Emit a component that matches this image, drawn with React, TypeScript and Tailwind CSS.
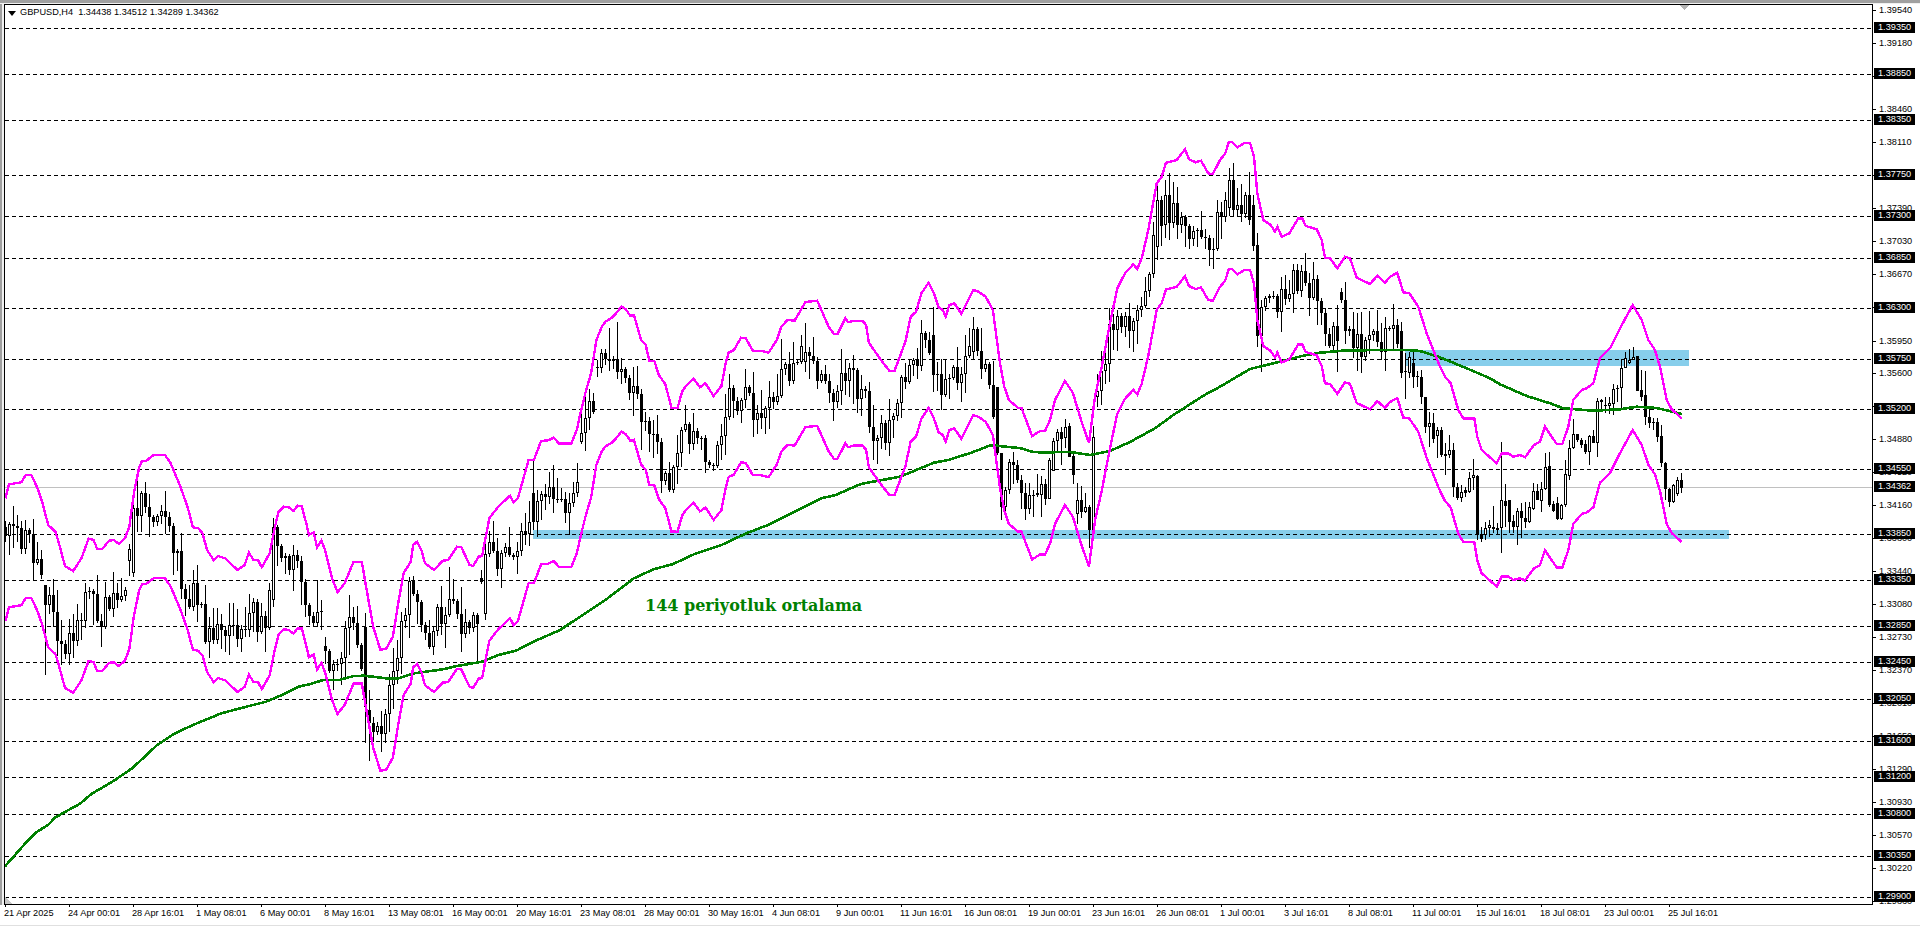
import React from "react";

type P = [number, number];
type C = { i: number; wt: number; bt: number; bb: number; wb: number; up: boolean };

const conv = (l: number[][], sx: number, ox: number, oy: number): P[] => l.map(([x, y]) => [ox + x / sx, oy + y / 3]);

const upper: P[] = [
  ...conv([[15,205],[25,163],[60,157],[72,135],[88,135],[105,175],[118,215],[135,285],[155,305],[165,340],[182,408],[205,423],[228,385],[248,326],[262,330],[272,356],[287,356],[305,332],[318,330],[333,342],[350,325],[362,290],[375,190],[390,110],[398,93],[410,92],[430,75],[462,75],[478,100],[505,170],[525,230],[540,292],[555,295],[567,310],[580,360],[598,390],[610,378],[630,385],[665,420],[685,405],[697,368],[710,390],[722,390],[733,412],[755,370],[770,290],[780,245],[795,230],[808,232],[822,243],[833,227],[845,228],[860,290],[865,315],[878,307],[888,352],[900,332],[910,360],[930,445],[945,487],[965,460],[990,395],[1013,395],[1025,470],[1045,590],[1065,660],[1082,655],[1100,620],[1115,520],[1130,430],[1150,395],[1157,345],[1168,335],[1180,360],[1190,400],[1215,420],[1240,392],[1255,390],[1280,350],[1292,352],[1315,405],[1325,408],[1340,380],[1350,378],[1370,265],[1395,230],[1428,197],[1438,217],[1450,205],[1480,90]], 2.8, 0, 430),
  ...conv([[95,540],[115,483],[135,481],[150,473],[165,490],[200,490],[215,450],[225,400],[240,335],[255,280],[270,180],[285,140],[295,125],[315,112],[325,100],[340,80],[352,87],[365,108],[375,105],[395,180],[408,195],[418,242],[432,243],[445,285],[463,313],[480,383],[497,384],[510,335],[520,318],[542,296],[560,322],[575,310],[598,348],[620,318],[632,250],[640,218],[655,210],[675,173],[688,175],[708,212],[730,212],[752,218],[775,180],[788,140],[805,120],[825,122],[855,66],[888,62],[900,90],[920,140],[935,162],[945,162],[967,115],[975,127],[990,122],[1015,122],[1025,135],[1033,188],[1065,238],[1090,272],[1105,272],[1135,185],[1150,110],[1165,95],[1180,40],[1200,8],[1215,40],[1228,82],[1240,90],[1248,110],[1258,75],[1272,70],[1292,102],[1325,30],[1340,35],[1360,50],[1380,90],[1390,170],[1400,250],[1412,320],[1425,360],[1450,383],[1460,383],[1490,468]], 2.8, 500, 280),
  [1040,431],[1045,431],[1050,420],[1055,400],[1065,381],[1073,393],[1075,400],[1082,423],[1089,443],
  ...conv([[165,800],[185,710],[210,580],[232,475],[255,430],[280,403],[292,417],[305,385],[325,300],[350,160],[365,140],[378,98],[410,90],[435,58],[447,88],[467,97],[483,92],[505,130],[518,133],[540,90],[555,72],[567,35],[575,35],[592,52],[615,38],[630,38],[642,80],[652,190],[670,270],[692,285],[705,305],[712,290],[725,320],[748,310],[775,265],[787,265],[797,288],[830,298],[845,330],[855,383],[870,385],[892,415],[915,380],[930,385],[950,443],[990,462],[1012,437],[1035,458],[1050,440],[1072,428],[1090,487],[1108,490],[1135,530],[1160,610],[1200,710]], 3, 1040, 130),
  ...conv([[615,410],[632,430],[655,510],[670,535],[695,535],[703,535],[712,590],[725,630],[770,670],[785,640],[805,640],[820,650],[840,645],[855,652]], 3, 1240, 240),
  ...conv([[402,435],[420,425],[435,380],[450,403],[470,432],[487,432],[505,380],[520,300],[545,270],[560,265],[580,250],[600,175],[630,145],[660,85],[698,15],[725,60],[745,120],[765,150],[780,200],[800,300],[815,328],[845,355]], 3, 1400, 300),
];

const lower: P[] = upper.map(([x, y]) => [x, y + 123 + (475 - y) * 0.012]);

const ma: P[] = [
  ...conv([[15,418],[75,350],[110,315],[145,293],[165,272],[200,252],[240,230],[275,200],[315,177],[348,157]], 3, 0, 727),
  ...conv([[370,1015],[400,985],[440,945],[490,910],[540,885],[620,850],[690,830],[745,815],[800,790],[835,770],[870,762],[905,750],[950,750],[990,738],[1020,737],[1090,746],[1115,745],[1160,730],[1240,718],[1280,708],[1350,695],[1395,675],[1445,662],[1500,632],[1568,600]], 2.8, 0, 430),
  ...conv([[295,960],[375,895],[430,868],[485,852],[545,822],[620,795],[690,760],[750,735],[900,655],[940,645],[1010,612],[1040,606],[1120,590],[1215,548],[1255,540],[1320,518],[1370,497],[1390,497],[1460,505],[1490,515],[1520,518]], 2.8, 500, 280),
  [1060,452],[1070,452],[1090,455],[1110,451],[1130,442],
  ...conv([[345,895],[400,855],[490,797],[540,770],[630,717],[700,700],[790,677],[840,668],[920,661],[1100,660]], 3, 1040, 130),
  ...conv([[60,153],[120,172],[200,205],[270,235],[300,253],[380,288],[450,310],[490,325],[580,332],[660,328],[710,320],[770,324],[845,342]], 3, 1400, 300),
];

const path: P[] = [
  ...conv([[15,290],[40,300],[60,340],[80,290],[100,370],[115,440],[130,510],[150,530],[172,620],[190,650],[215,600],[240,510],[260,490],[285,560],[320,510],[350,510],[375,330],[395,200],[420,240],[450,250],[485,320],[510,430],[530,490],[560,500],[580,600],[610,580],[640,590],[665,630],[700,530],[730,600],[750,550],[775,350],[800,390],[840,420],[855,500],[890,560],[905,580],[925,680],[950,700],[975,600],[1005,600],[1025,740],[1050,870],[1070,900],[1100,780],[1115,650],[1135,530],[1165,470],[1180,560],[1200,630],[1240,560],[1270,530],[1310,590],[1340,560],[1370,380],[1400,395],[1440,400],[1460,320],[1485,240],[1520,190],[1568,220]], 2.8, 0, 430),
  ...conv([[170,680],[195,680],[210,650],[228,530],[240,450],[270,340],[285,250],[305,280],[345,250],[365,310],[385,350],[405,420],[430,470],[450,540],[475,600],[500,530],[520,450],[550,500],[585,520],[610,520],[630,400],[650,360],[690,360],[720,420],[755,410],[775,340],[795,280],[830,290],[855,230],[885,240],[900,300],[930,390],[950,340],[975,280],[1000,310],[1025,330],[1040,440],[1065,450],[1090,480],[1112,430],[1125,350],[1145,270],[1170,250],[1190,170],[1212,220],[1235,330],[1255,280],[1285,300],[1305,260],[1330,200],[1370,270],[1395,430],[1405,580],[1440,590],[1470,640],[1495,700],[1525,640]], 2.8, 500, 280),
  ...conv([[170,870],[185,770],[205,670],[222,560],[250,575],[290,590],[315,480],[330,430],[345,300],[375,240],[410,260],[445,280],[470,310],[495,310],[520,340],[535,280],[555,240],[580,190],[600,240],[625,215],[640,290],[652,480],[665,570],[690,520],[725,510],[745,480],[770,440],[795,480],[830,490],[845,540],[865,630],[890,610],[915,540],[940,640],[965,660],[1000,640],[1040,630],[1075,600],[1085,680]], 3, 1040, 130),
];

const z11: number[][] = [[228,252,284,352,1],[238,252,296,315,0],[175,180,296,298,1],[115,122,212,212,1],[88,97,122,152,1],[82,97,116,195,0],[58,82,115,145,1],[70,78,170,172,0],[155,168,225,252,0],[250,300,342,372,1],[258,300,335,355,0],[280,322,335,338,1],[315,322,390,445,0],[78,112,392,405,1]];

const z4: number[][] = [[65,92,218,235,0],[160,214,217,298,1],[155,170,218,235,1],[155,190,232,265,0],[212,229,232,260,1],[210,232,290,312,0],[290,292,382,400,0],[335,370,382,440,1],[340,370,416,430,0],[380,390,407,475,1],[380,390,465,470,0],[430,462,467,525,0],[405,450,465,475,1],[430,450,562,590,0],[550,560,595,600,0],[555,575,595,605,1],[560,570,578,590,0],[515,535,575,580,1],[478,525,535,570,1],[525,528,703,720,0],[680,703,716,725,0],[665,685,705,720,1],[660,675,685,710,1],[618,680,688,700,0],[670,685,690,705,1],[425,600,685,760,1],[553,603,617,680,0],[600,600,665,700,0],[645,663,680,700,0],[625,633,680,735,1],[610,633,655,715,0],[605,655,665,685,0],[605,620,665,670,1],[548,573,628,630,1],[552,573,600,600,0],[545,568,602,635,1],[460,500,568,570,1],[457,497,615,620,0],[603,613,632,635,0],[590,608,658,660,0],[612,615,656,660,1],[480,523,615,620,1],[420,445,527,540,1],[358,402,445,447,1],[402,402,420,425,0],[415,420,435,445,0],[420,432,455,462,0],[405,407,455,495,1],[390,408,428,430,0],[295,303,428,470,1],[297,300,307,335,1],[292,315,318,340,1],[290,310,317,342,1],[252,268,312,345,1],[255,265,268,305,0],[178,205,265,325,1],[155,175,205,205,1],[148,180,188,192,1],[140,170,180,180,1],[167,167,272,272,0],[210,270,290,302,0],[212,285,352,375,0],[320,352,370,385,0],[355,365,367,390,0],[355,365,410,425,0],[375,408,490,500,0],[487,490,568,600,0],[565,568,605,620,0],[553,555,605,610,1],[530,540,582,587,1],[520,540,563,580,0]];

const overrides: Record<number, [number, number, number, number, boolean]> = {
  10: [585, 585, 605, 675, false],
  32: [498, 508, 573, 577, true],
  67: [518, 527, 600, 607, true],
  90: [613, 627, 707, 743, false],
  91: [690, 710, 723, 761, false],
  120: [535, 554, 614, 620, true],
  132: [460, 493, 522, 530, false],
  200: [323, 352, 362, 372, true],
  232: [307, 335, 375, 392, false],
  242: [317, 329, 352, 360, true],
  248: [387, 387, 453, 455, false],
  249: [453, 453, 507, 520, false],
  288: [180, 200, 247, 260, true],
  289: [196, 200, 226, 246, false],
  290: [180, 195, 225, 238, true],
  291: [173, 195, 223, 240, false],
  306: [168, 180, 208, 216, true],
  307: [163, 180, 210, 216, false],
  312: [195, 205, 246, 251, false],
  313: [233, 245, 336, 347, false],
  314: [300, 307, 336, 372, true],
};

function interp(list: P[], x: number): number {
  if (x <= list[0][0]) return list[0][1];
  for (let k = 1; k < list.length; k++) {
    if (x <= list[k][0]) {
      const [x0, y0] = list[k - 1];
      const [x1, y1] = list[k];
      return y0 + ((y1 - y0) * (x - x0)) / (x1 - x0 || 1);
    }
  }
  return list[list.length - 1][1];
}

function buildCandles(): C[] {
  let seed = 20250425;
  const rnd = () => {
    seed = (seed + 0x6d2b79f5) | 0;
    let t = Math.imul(seed ^ (seed >>> 15), 1 | seed);
    t = (t + Math.imul(t ^ (t >>> 7), 61 | t)) ^ t;
    return ((t ^ (t >>> 14)) >>> 0) / 4294967296;
  };
  const out: C[] = [];
  let prev = interp(path, 5);
  for (let i = 0; i < 420; i++) {
    const x = 5 + 4 * i;
    if (i >= 349) {
      const d = z4[i - 349];
      const f = (v: number) => Math.round(300 + v / 3);
      out.push({ i, wt: f(d[0]), bt: f(d[1]), bb: f(d[2]), wb: f(d[3]), up: d[4] === 1 });
      continue;
    }
    if (i >= 259 && i < 273) {
      const d = z11[i - 259];
      const f = (v: number) => Math.round(400 + v / 3);
      out.push({ i, wt: f(d[0]), bt: f(d[1]), bb: f(d[2]), wb: f(d[3]), up: d[4] === 1 });
      prev = d[4] === 1 ? f(d[1]) : f(d[2]);
      continue;
    }
    if (overrides[i]) {
      const [wt, bt, bb, wb, up] = overrides[i];
      out.push({ i, wt, bt, bb, wb, up });
      prev = up ? bt : bb;
      continue;
    }
    const close = interp(path, x + 2) + (rnd() - 0.5) * 32;
    const open = Math.abs(prev - close) > 40 ? close + (rnd() - 0.5) * 26 : prev;
    const bt = Math.round(Math.min(open, close));
    const bb = Math.max(bt + 1, Math.round(Math.max(open, close)));
    const r1 = rnd();
    const r2 = rnd();
    const wt = Math.round(bt - r1 * r1 * 22 - 2 - (rnd() < 0.08 ? 14 : 0));
    const wb = Math.round(bb + r2 * r2 * 22 + 2 + (rnd() < 0.08 ? 14 : 0));
    out.push({ i, wt, bt, bb, wb, up: close < open });
    prev = close;
  }
  return out;
}

const candles = buildCandles();
const line = (l: P[]) => l.map(([x, y]) => `${x.toFixed(1)},${y.toFixed(1)}`).join(" ");

const levels = [28, 74, 120, 175, 216, 258, 308, 359, 409, 469, 534, 580, 626, 662, 699, 741, 777, 814, 856, 897];

const plain: [string, number][] = [["1.39540",10],["1.39180",43],["1.38820",76],["1.38460",109],["1.38110",142],["1.37750",175],["1.37390",208],["1.37030",241],["1.36670",274],["1.36310",307],["1.35950",341],["1.35600",373],["1.35240",406],["1.34880",439],["1.34520",472],["1.34160",505],["1.33800",538],["1.33440",571],["1.33080",604],["1.32730",637],["1.32370",670],["1.32010",703],["1.31650",736],["1.31290",769],["1.30930",802],["1.30570",835],["1.30220",868],["1.29860",901]];

const marks: [string, number][] = [["1.39350",28],["1.38850",74],["1.38350",120],["1.37750",175],["1.37300",216],["1.36850",258],["1.36300",308],["1.35750",359],["1.35200",409],["1.34550",469],["1.34362",487],["1.33850",534],["1.33350",580],["1.32850",626],["1.32450",662],["1.32050",699],["1.31600",741],["1.31200",777],["1.30800",814],["1.30350",856],["1.29900",897]];

const times = ["21 Apr 2025","24 Apr 00:01","28 Apr 16:01","1 May 08:01","6 May 00:01","8 May 16:01","13 May 08:01","16 May 00:01","20 May 16:01","23 May 08:01","28 May 00:01","30 May 16:01","4 Jun 08:01","9 Jun 00:01","11 Jun 16:01","16 Jun 08:01","19 Jun 00:01","23 Jun 16:01","26 Jun 08:01","1 Jul 00:01","3 Jul 16:01","8 Jul 08:01","11 Jul 00:01","15 Jul 16:01","18 Jul 08:01","23 Jul 00:01","25 Jul 16:01"];

function Plot() {
  return (
    <svg width={1867} height={899} viewBox="5 5 1867 899" className="block" shapeRendering="crispEdges">
      <rect x={533} y={530} width={1196} height={9} fill="#87ceeb" />
      <rect x={1405} y={350} width={284} height={16} fill="#87ceeb" />
      {levels.map((y) => (
        <line key={y} x1={5} x2={1872} y1={y + 0.5} y2={y + 0.5} stroke="#000" strokeWidth={1} strokeDasharray="4 3" />
      ))}
      <line x1={5} x2={1872} y1={487.5} y2={487.5} stroke="#c0c0c0" strokeWidth={1} />
      {candles.map((c) => {
        const x = 5 + 4 * c.i;
        return (
          <g key={c.i}>
            <rect x={x} y={c.wt} width={1} height={c.wb - c.wt} fill="#000" />
            <rect x={x - 1} y={c.bt} width={3} height={Math.max(1, c.bb - c.bt)} fill="#000" />
            {c.up && c.bb - c.bt > 2 && <rect x={x} y={c.bt + 1} width={1} height={c.bb - c.bt - 2} fill="#fff" />}
          </g>
        );
      })}
      <polyline points={line(ma)} fill="none" stroke="#008000" strokeWidth={2.6} />
      <polyline points={line(upper)} fill="none" stroke="#ff00ff" strokeWidth={2.4} />
      <polyline points={line(lower)} fill="none" stroke="#ff00ff" strokeWidth={2.4} />
      <polygon points="1680,5 1689,5 1684.5,10" fill="#b4b4b4" />
      <polygon points="5,897 5,904 12,904" fill="#c8c8c8" />
    </svg>
  );
}

export default function App() {
  return (
    <div className="relative flex h-[927px] w-[1920px] flex-col overflow-hidden bg-white font-['Liberation_Sans',sans-serif] text-[9.2px] leading-[11px] text-black">
      <div className="h-[3px] w-full bg-[#a0a0a0]" />
      <div className="h-px w-full bg-[#f0f0f0]" />
      <div className="flex h-[901px] w-full">
        <div className="flex w-1">
          <div className="w-0.5 bg-[#a0a0a0]" />
          <div className="w-0.5 bg-[#f0f0f0]" />
        </div>
        <div className="relative h-[901px] w-[1869px] border border-black">
          <Plot />
          <div className="absolute left-[3px] top-[2px] flex items-center gap-1">
            <svg width="8" height="5" viewBox="0 0 8 5" className="mt-px">
              <polygon points="0,0 8,0 4,5" fill="#000" />
            </svg>
            <span className="whitespace-pre">GBPUSD,H4  1.34438 1.34512 1.34289 1.34362</span>
          </div>
          <div className="absolute left-[640px] top-[591px] whitespace-nowrap font-['DejaVu_Serif',serif] text-[16px] font-bold leading-5 text-[#008000]">
            144 periyotluk ortalama
          </div>
        </div>
        <div className="relative w-[47px]">
          {plain.map(([t, y]) => (
            <div key={t} className="absolute left-0 flex h-[11px] items-center" style={{ top: y - 9 }}>
              <div className="h-px w-[3px] bg-black" />
              <span className="ml-[3px]">{t}</span>
            </div>
          ))}
          {marks.map(([t, y]) => (
            <div key={t + y} className="absolute left-px h-[11px] w-[41px] bg-black pl-1 text-white" style={{ top: y - 10 }}>
              {t}
            </div>
          ))}
        </div>
      </div>
      <div className="flex h-5 w-full pl-[5px]">
        {times.map((t) => (
          <div key={t} className="relative h-5 w-16 shrink-0">
            <div className="h-[2px] w-px bg-black" />
            <span className="absolute left-[-1px] top-[3px] whitespace-nowrap">{t}</span>
          </div>
        ))}
      </div>
      <div className="h-px w-full bg-[#e0e0e0]" />
    </div>
  );
}
